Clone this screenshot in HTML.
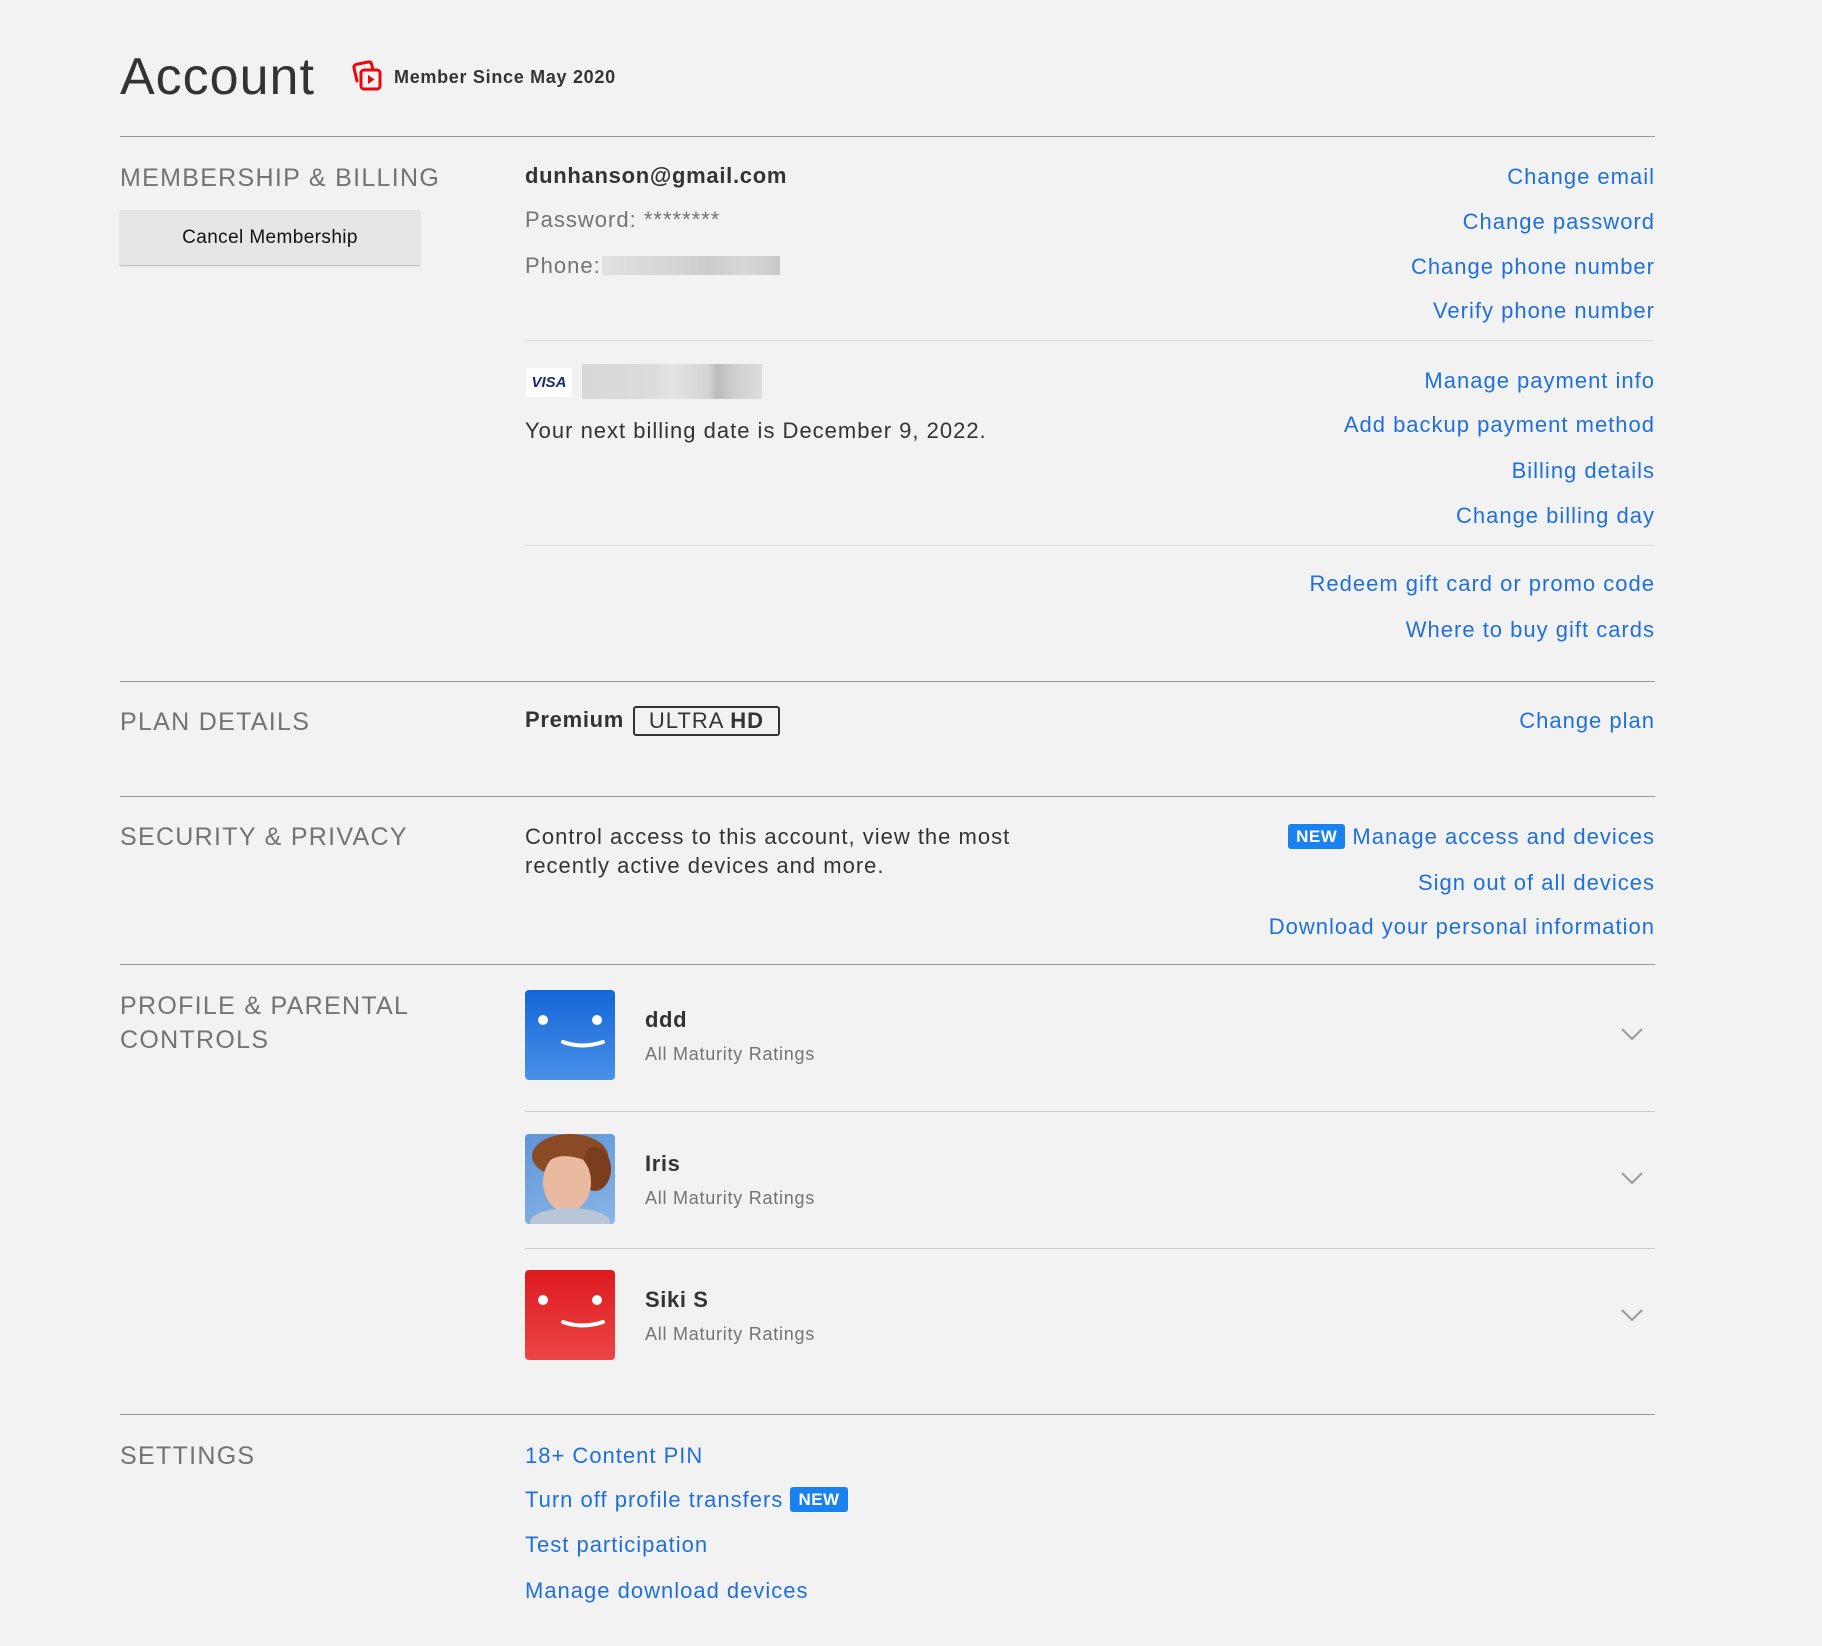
<!DOCTYPE html>
<html><head><meta charset="utf-8">
<style>
html,body{margin:0;padding:0;background:#f2f2f2;width:1822px;height:1646px;overflow:hidden;font-family:"Liberation Sans",Arial,sans-serif;}
.a{position:absolute;white-space:nowrap;line-height:30px;}
.lbl{color:#737373;font-size:25px;left:120px;letter-spacing:1.3px;}
.txt{color:#333;font-size:22px;letter-spacing:1px;}
.lnk{color:#1f6fdc;font-size:22px;right:167px;text-align:right;letter-spacing:1px;}
.sl{color:#1f6fdc;font-size:22px;left:525px;letter-spacing:1px;}
.hr{position:absolute;height:1px;background:#999;}
.hr2{position:absolute;height:1px;background:#ddd;left:525px;width:1130px;}
.new{display:inline-block;background:#1a82f0;color:#fff;font-weight:bold;font-size:17px;line-height:25px;padding:0 8px;border-radius:3px;vertical-align:middle;position:relative;top:-2px;letter-spacing:0.5px;}
.av{position:absolute;left:525px;width:90px;height:90px;border-radius:4px;overflow:hidden;}
.nm{position:absolute;left:645px;color:#333;font-weight:bold;font-size:22px;line-height:30px;letter-spacing:0.6px;}
.sub{position:absolute;left:645px;color:#737373;font-size:18px;line-height:24px;letter-spacing:0.75px;}
.chev{position:absolute;left:1620px;}
</style></head><body>

<div class="a" style="left:120px;top:46px;font-size:52px;line-height:62px;color:#333;letter-spacing:1px;">Account</div>
<svg style="position:absolute;left:351px;top:59px" width="34" height="34" viewBox="0 0 34 34">
<path d="M6 22 L3 9 Q2.5 6 5.5 5.3 L17 3 Q20 2.5 20.7 5.5 L21.5 9" fill="none" stroke="#e50914" stroke-width="3" stroke-linejoin="round" stroke-linecap="round"/>
<rect x="10" y="11" width="19" height="19" rx="3" fill="none" stroke="#e50914" stroke-width="3"/>
<path d="M17 16 L23.5 20.5 L17 25Z" fill="#e50914"/>
</svg>
<div class="a" style="left:394px;top:62px;font-size:18px;font-weight:bold;color:#333;letter-spacing:0.7px;">Member Since May 2020</div>

<div class="hr" style="left:120px;width:1535px;top:136px;"></div>

<div class="a lbl" style="top:163px;">MEMBERSHIP &amp; BILLING</div>
<div style="position:absolute;left:120px;top:210px;width:300px;height:55px;background:#e6e6e6;box-shadow:0 1px 1px rgba(0,0,0,.25);text-align:center;line-height:55px;font-size:19px;color:#111;letter-spacing:0.4px;">Cancel Membership</div>

<div class="a txt" style="left:525px;top:161px;font-weight:bold;letter-spacing:0.7px;">dunhanson@gmail.com</div>
<div class="a" style="left:525px;top:205px;font-size:22px;color:#737373;letter-spacing:1px;">Password: ********</div>
<div class="a" style="left:525px;top:251px;font-size:22px;color:#737373;letter-spacing:1px;">Phone:</div>
<div style="position:absolute;left:602px;top:256px;width:178px;height:19px;background:linear-gradient(90deg,#e0e0e0,#d6d6d6 40%,#ccc 60%,#d8d8d8 80%,#c8c8c8);"></div>

<div class="a lnk" style="top:162px;">Change email</div>
<div class="a lnk" style="top:207px;">Change password</div>
<div class="a lnk" style="top:252px;">Change phone number</div>
<div class="a lnk" style="top:296px;">Verify phone number</div>

<div class="hr2" style="top:340px;"></div>

<div style="position:absolute;left:526px;top:368px;width:46px;height:29px;background:#fff;text-align:center;line-height:29px;font-size:15px;font-weight:bold;font-style:italic;color:#1a2a7a;">VISA</div>
<div style="position:absolute;left:582px;top:364px;width:180px;height:35px;background:linear-gradient(90deg,#d8d8d8,#dcdcdc 40%,#e3e3e3 50%,#d5d5d5 70%,#bbb 75%,#d0d0d0 85%,#ddd);"></div>
<div class="a txt" style="left:525px;top:416px;">Your next billing date is December 9, 2022.</div>

<div class="a lnk" style="top:366px;">Manage payment info</div>
<div class="a lnk" style="top:410px;">Add backup payment method</div>
<div class="a lnk" style="top:456px;">Billing details</div>
<div class="a lnk" style="top:501px;">Change billing day</div>

<div class="hr2" style="top:545px;"></div>

<div class="a lnk" style="top:569px;">Redeem gift card or promo code</div>
<div class="a lnk" style="top:615px;">Where to buy gift cards</div>

<div class="hr" style="left:120px;width:1535px;top:681px;"></div>

<div class="a lbl" style="top:707px;">PLAN DETAILS</div>
<div class="a txt" style="left:525px;top:705px;font-weight:bold;letter-spacing:0.7px;">Premium</div>
<div style="position:absolute;left:633px;top:706px;width:143px;height:26px;border:2px solid #333;border-radius:3px;font-size:22px;line-height:26px;text-align:center;color:#333;letter-spacing:1px;">ULTRA <b>HD</b></div>
<div class="a lnk" style="top:706px;">Change plan</div>

<div class="hr" style="left:120px;width:1535px;top:796px;"></div>

<div class="a lbl" style="top:822px;">SECURITY &amp; PRIVACY</div>
<div class="a txt" style="left:525px;top:822px;">Control access to this account, view the most</div>
<div class="a txt" style="left:525px;top:851px;">recently active devices and more.</div>
<div class="a lnk" style="top:822px;"><span class="new">NEW</span> Manage access and devices</div>
<div class="a lnk" style="top:868px;">Sign out of all devices</div>
<div class="a lnk" style="top:912px;">Download your personal information</div>

<div class="hr" style="left:120px;width:1535px;top:964px;"></div>

<div class="a lbl" style="top:991px;">PROFILE &amp; PARENTAL</div>
<div class="a lbl" style="top:1025px;">CONTROLS</div>

<div class="av" style="top:990px;background:linear-gradient(#1466d8,#4a90e8);">
<svg width="90" height="90"><circle cx="18" cy="30" r="5" fill="#fff"/><circle cx="72" cy="30" r="5" fill="#fff"/><path d="M38 52 Q57 59 78 52" fill="none" stroke="#fff" stroke-width="4" stroke-linecap="round"/></svg></div>
<div class="nm" style="top:1005px;">ddd</div>
<div class="sub" style="top:1042px;">All Maturity Ratings</div>
<svg class="chev" style="top:1027px" width="24" height="16"><path d="M2 2 L12 12 L22 2" fill="none" stroke="#999" stroke-width="2"/></svg>

<div class="hr2" style="top:1111px;background:#ccc;"></div>

<div class="av" style="top:1134px;background:linear-gradient(160deg,#5d95d8,#8ab5e6);">
<svg width="90" height="90"><ellipse cx="45" cy="22" rx="38" ry="22" fill="#8a4a25"/><ellipse cx="70" cy="35" rx="16" ry="22" fill="#7a3d1d"/><ellipse cx="42" cy="48" rx="24" ry="30" fill="#e9b9a0"/><ellipse cx="45" cy="88" rx="40" ry="14" fill="#b8c6d8"/><path d="M18 28 Q30 12 60 22" fill="none" stroke="#8a4a25" stroke-width="8"/></svg></div>
<div class="nm" style="top:1149px;">Iris</div>
<div class="sub" style="top:1186px;">All Maturity Ratings</div>
<svg class="chev" style="top:1171px" width="24" height="16"><path d="M2 2 L12 12 L22 2" fill="none" stroke="#999" stroke-width="2"/></svg>

<div class="hr2" style="top:1248px;background:#ccc;"></div>

<div class="av" style="top:1270px;background:linear-gradient(#dd1a1f,#ec4545);">
<svg width="90" height="90"><circle cx="18" cy="30" r="5" fill="#fff"/><circle cx="72" cy="30" r="5" fill="#fff"/><path d="M38 52 Q57 59 78 52" fill="none" stroke="#fff" stroke-width="4" stroke-linecap="round"/></svg></div>
<div class="nm" style="top:1285px;">Siki S</div>
<div class="sub" style="top:1322px;">All Maturity Ratings</div>
<svg class="chev" style="top:1308px" width="24" height="16"><path d="M2 2 L12 12 L22 2" fill="none" stroke="#999" stroke-width="2"/></svg>

<div class="hr" style="left:120px;width:1535px;top:1414px;"></div>

<div class="a lbl" style="top:1441px;">SETTINGS</div>
<div class="a sl" style="top:1441px;">18+ Content PIN</div>
<div class="a sl" style="top:1485px;">Turn off profile transfers <span class="new">NEW</span></div>
<div class="a sl" style="top:1530px;">Test participation</div>
<div class="a sl" style="top:1576px;">Manage download devices</div>

</body></html>
